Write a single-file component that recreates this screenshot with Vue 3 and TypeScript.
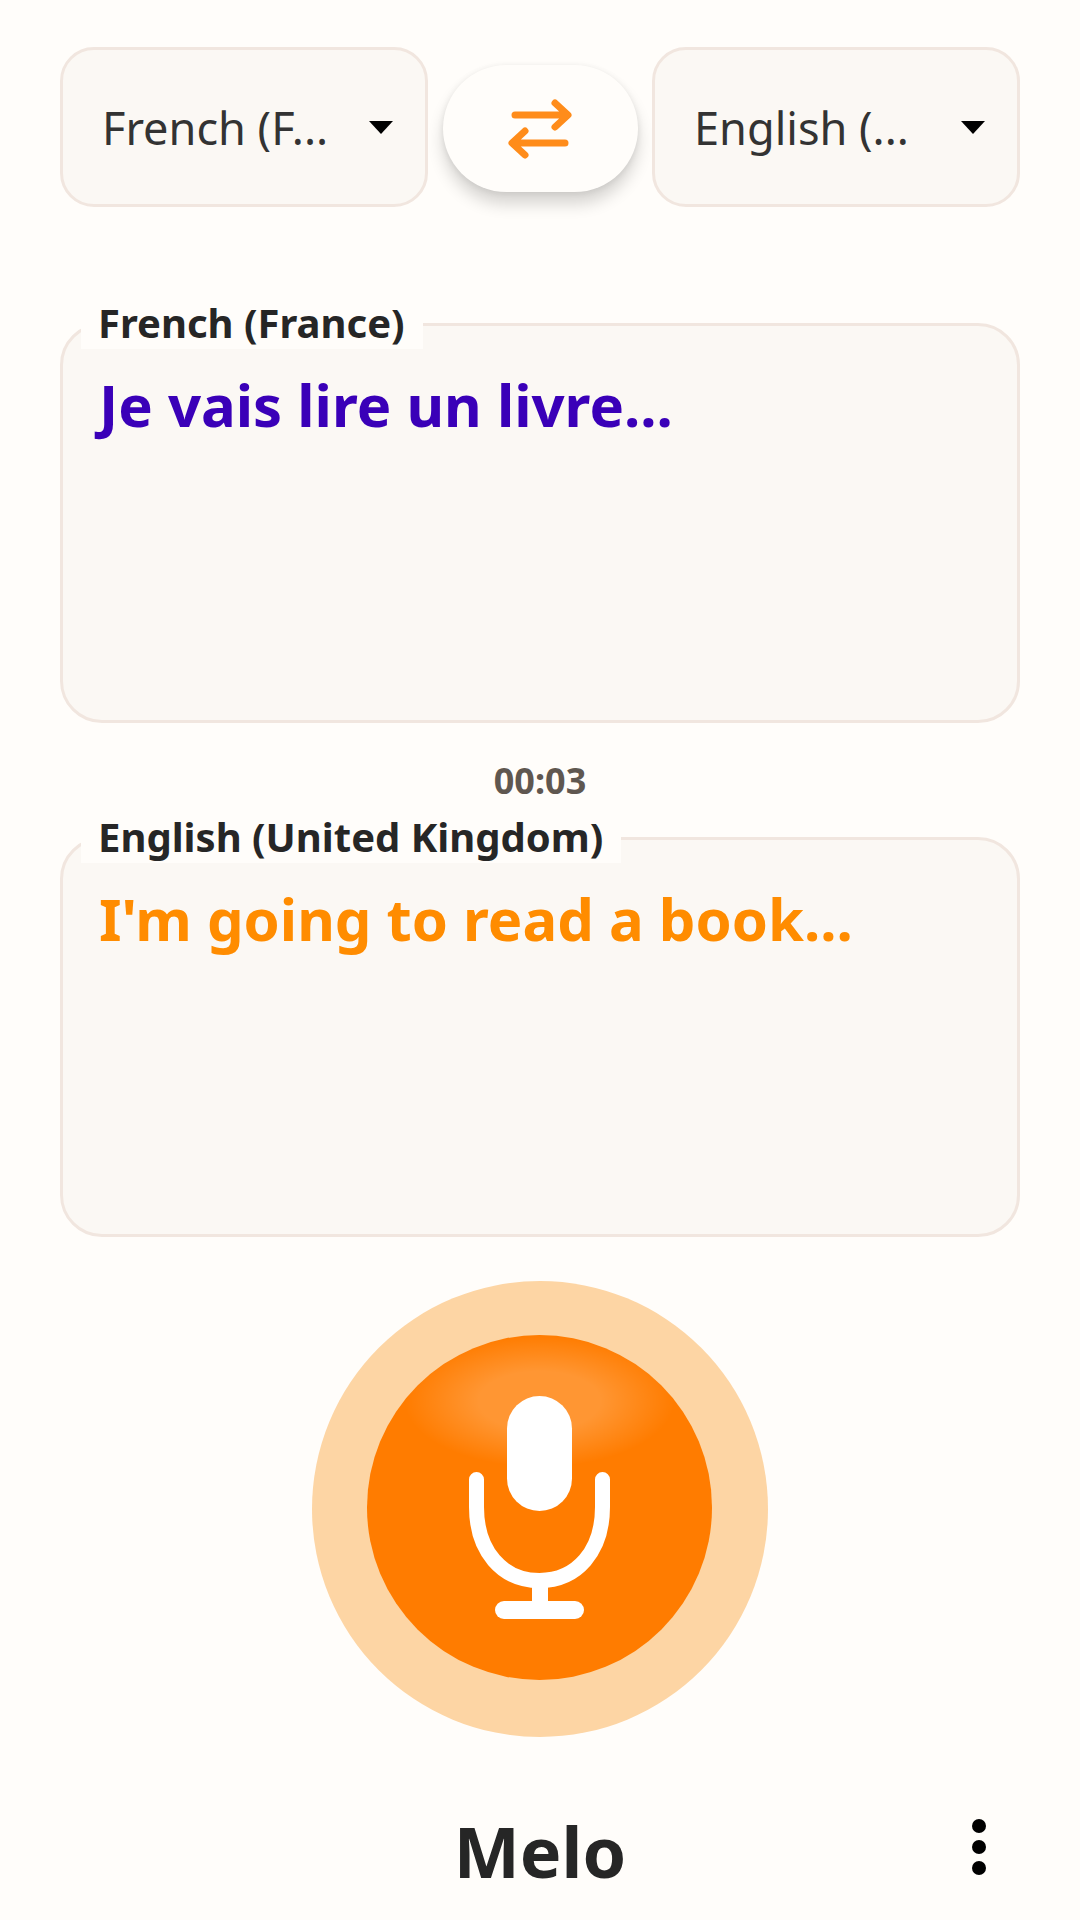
<script setup lang="ts">
const languages = [
  { short: 'French (F...', label: 'French (France)', text: 'Je vais lire un livre...', tone: 'source' },
  { short: 'English (...', label: 'English (United Kingdom)', text: "I'm going to read a book...", tone: 'target' },
]
</script>

<template>
  <div class="app">
    <div class="selectors">
      <div class="select">
        <span class="select-text">{{ languages[0].short }}</span>
        <span class="caret"></span>
      </div>
      <button class="swap">
        <svg width="70" height="70" viewBox="0 0 70 70" fill="none" stroke="#ff8c1a" stroke-width="7" stroke-linecap="round" stroke-linejoin="round">
          <path d="M10 22H62M50 10L63 22L50 34" />
          <path d="M60 50H8M20 38L7 50L20 62" />
        </svg>
      </button>
      <div class="select">
        <span class="select-text">{{ languages[1].short }}</span>
        <span class="caret"></span>
      </div>
    </div>

    <section class="panel first">
      <span class="panel-label">{{ languages[0].label }}</span>
      <p class="panel-text source">{{ languages[0].text }}</p>
    </section>

    <div class="timer">00:03</div>

    <section class="panel">
      <span class="panel-label">{{ languages[1].label }}</span>
      <p class="panel-text target">{{ languages[1].text }}</p>
    </section>

    <div class="mic-row">
      <div class="mic-halo">
        <div class="mic-button">
          <svg width="345" height="345" viewBox="0 0 345 345" fill="none">
            <rect x="140" y="61" width="65" height="115" rx="32.5" fill="#fff" />
            <path d="M109.5 144.5V172C109.5 216 135 245.5 172.5 245.5C210 245.5 235.5 216 235.5 172V144.5" stroke="#fff" stroke-width="15" stroke-linecap="round" />
            <path d="M173 245V272" stroke="#fff" stroke-width="16" />
            <rect x="128" y="266" width="89" height="18" rx="9" fill="#fff" />
          </svg>
        </div>
      </div>
    </div>

    <footer class="footer">
      <span></span>
      <h1 class="title">Melo</h1>
      <div class="menu">
        <i></i>
        <i></i>
        <i></i>
      </div>
    </footer>
  </div>
</template>

<style>
html,
body {
  margin: 0;
  background: #fffdfa;
}
</style>

<style scoped>
.app {
  box-sizing: border-box;
  width: 1080px;
  height: 1920px;
  padding: 47px 60px 0;
  background: #fffdfa;
  font-family: "Noto Sans", "Open Sans", sans-serif;
  display: flex;
  flex-direction: column;
  overflow: hidden;
}

.selectors {
  display: flex;
  align-items: center;
  justify-content: space-between;
  height: 160px;
}

.select {
  box-sizing: border-box;
  width: 368px;
  height: 160px;
  padding: 0 32px 0 39px;
  background: #fbf8f4;
  border: 3px solid #f1e6df;
  border-radius: 34px;
  display: flex;
  align-items: center;
  justify-content: space-between;
}

.select-text {
  font-size: 46px;
  color: #333;
  transform: scaleX(0.98);
  transform-origin: left center;
  white-space: nowrap;
}

.caret {
  width: 0;
  height: 0;
  border-left: 12px solid transparent;
  border-right: 12px solid transparent;
  border-top: 13px solid #000;
}

.swap {
  width: 195px;
  height: 127px;
  margin-top: 2px;
  padding: 0;
  border: none;
  border-radius: 64px;
  background: #fffdfa;
  box-shadow: 0 1px 6px rgba(0, 0, 0, 0.08), 0 12px 16px rgba(0, 0, 0, 0.16);
  display: flex;
  align-items: center;
  justify-content: center;
}

.panel {
  position: relative;
  box-sizing: border-box;
  height: 400px;
  padding: 40px 36px 0;
  background: #fbf8f4;
  border: 3px solid #f1e6df;
  border-radius: 42px;
}

.panel.first {
  margin-top: 116px;
}

.panel-label {
  position: absolute;
  top: -27px;
  left: 18px;
  padding: 0 18px 0 17px;
  height: 50px;
  line-height: 48px;
  background: #fffdfa;
  font-size: 40px;
  font-weight: 700;
  color: #262626;
  white-space: nowrap;
}

.panel-text {
  margin: 0;
  font-size: 58px;
  font-weight: 700;
  line-height: 78px;
  white-space: nowrap;
}

.source {
  color: #3a00b8;
}

.target {
  color: #ff8c00;
}

.timer {
  height: 114px;
  line-height: 116px;
  text-align: center;
  font-size: 36px;
  font-weight: 700;
  color: #5f5750;
}

.mic-row {
  margin-top: 44px;
  display: flex;
  justify-content: center;
}

.mic-halo {
  box-sizing: border-box;
  width: 456px;
  height: 456px;
  padding: 0 2px 3px 0;
  border-radius: 50%;
  background: #fdd5a4;
  display: flex;
  align-items: center;
  justify-content: center;
}

.mic-button {
  width: 345px;
  height: 345px;
  border-radius: 50%;
  background:
    radial-gradient(ellipse 135px 66px at 50% 66px, rgba(255, 255, 255, 0.2) 45%, rgba(255, 255, 255, 0) 100%),
    #ff7c00;
}

.mic-button svg {
  display: block;
}

.footer {
  margin-top: 56px;
  height: 116px;
  display: grid;
  grid-template-columns: 1fr auto 1fr;
  align-items: center;
}

.title {
  margin: 0;
  font-size: 70px;
  font-weight: 700;
  color: #262626;
}

.menu {
  justify-self: end;
  margin-right: 34px;
  margin-top: -8px;
  display: flex;
  flex-direction: column;
  gap: 7px;
}

.menu i {
  display: block;
  width: 14px;
  height: 14px;
  border-radius: 50%;
  background: #000;
}
</style>
